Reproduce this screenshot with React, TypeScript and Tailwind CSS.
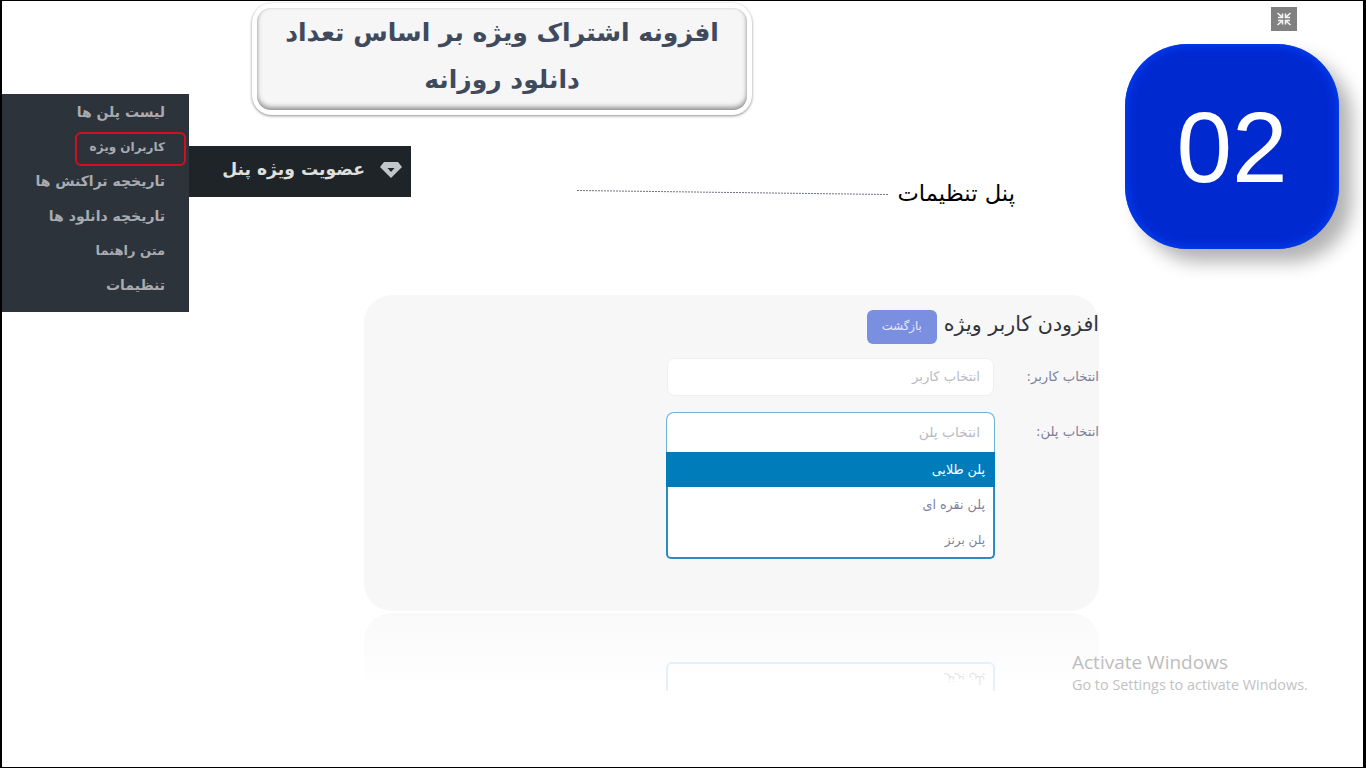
import React from 'react';

const fa = { fontFamily: '"DejaVu Sans", "Noto Sans", sans-serif' };

const SideMenu = () => (
  <div dir="rtl" className="absolute left-0 top-[93px] w-[187px] h-[218px] bg-[#2c333b] flex flex-col pt-[1px] pr-[24px] text-[14px] font-bold text-[#a9abb0]">
    <div className="h-[34.6px] flex items-center whitespace-nowrap">لیست پلن ها</div>
    <div className="h-[34.6px] flex items-center whitespace-nowrap relative text-[12px] pt-[1px]">
      کاربران ویژه
      <span className="absolute right-[-21px] top-[2px] w-[111px] h-[34px] border-2 border-[#d0101c] rounded-[6px]" />
    </div>
    <div className="h-[34.6px] flex items-center whitespace-nowrap">تاریخچه تراکنش ها</div>
    <div className="h-[34.6px] flex items-center whitespace-nowrap">تاریخچه دانلود ها</div>
    <div className="h-[34.6px] flex items-center whitespace-nowrap text-[13px]">متن راهنما</div>
    <div className="h-[34.6px] flex items-center whitespace-nowrap">تنظیمات</div>
  </div>
);

const HeaderBar = () => (
  <div dir="rtl" className="absolute left-[187px] top-[145px] w-[222px] h-[51px] bg-[#1f2429] flex items-center pr-[8px] gap-[14px] pb-[3px]">
    <svg width="24" height="18" viewBox="0 0 24 18">
      <path d="M5 1h14l4 5-11 11L1 6z" fill="#c3c6c8" />
      <path d="M8.5 7h7L12 11z" fill="#20252a" />
    </svg>
    <span className="text-[17.2px] font-bold text-[#dfe0de] whitespace-nowrap">عضویت ویژه پنل</span>
  </div>
);

const TitleCard = () => (
  <div className="absolute left-[250px] top-[2px] w-[500px] h-[112px] bg-white rounded-[20px] p-[5px] shadow-[0_1px_3px_rgba(0,0,0,0.45)]">
    <div dir="rtl" className="h-full rounded-[14px] bg-[#f6f6f6] shadow-[inset_0_-3px_5px_rgba(0,0,0,0.38),inset_0_0_3px_rgba(0,0,0,0.12)] flex items-center justify-center text-center text-[25px] leading-[47px] font-bold text-[#3f4a5c] pb-[6px]">
      <div>
        افزونه اشتراک ویژه بر اساس تعداد
        <br />
        دانلود روزانه
      </div>
    </div>
  </div>
);

const NumberBadge = () => (
  <div className="absolute left-[1123px] top-[43px] w-[214px] h-[205px] rounded-[62px] bg-[#0029d0] shadow-[inset_0_0_12px_#0048ff,13px_13px_18px_rgba(0,0,0,0.3)] flex items-center justify-center">
    <span className="text-[100px] leading-none text-white" style={{ fontFamily: '"Liberation Sans", Arial, sans-serif' }}>
      02
    </span>
  </div>
);

const CollapseIcon = () => (
  <div className="absolute left-[1269px] top-[6px] w-[26px] h-[24px] bg-[#808080] flex items-center justify-center">
    <svg width="16" height="14" viewBox="0 0 16 14" fill="none" stroke="#f2f2f2" strokeWidth="1.6">
      <path d="M1.5 1 6 5M6.5 1.5v4H2" />
      <path d="M14.5 1 10 5M9.5 1.5v4H14" />
      <path d="M1.5 13 6 9M6.5 12.5v-4H2" />
      <path d="M14.5 13 10 9M9.5 12.5v-4H14" />
    </svg>
  </div>
);

const Callout = () => (
  <>
    <svg className="absolute left-[575px] top-[187px]" width="312" height="8" viewBox="0 0 312 8">
      <line x1="0" y1="2.5" x2="311" y2="6.5" stroke="#6b7280" strokeWidth="1" strokeDasharray="2 1" />
    </svg>
    <div dir="rtl" className="absolute left-[863px] top-[177px] w-[150px] text-[22.7px] leading-[30px] text-black whitespace-nowrap">
      پنل تنظیمات
    </div>
  </>
);

const FormPanel = () => (
  <div dir="rtl" className="absolute left-[362px] top-[294px] w-[735px] h-[316px] bg-[#f7f7f7] rounded-[28px] overflow-hidden flex flex-col pt-[15px]">
    <div className="flex items-center h-[34px] gap-[7px]">
      <span className="text-[20.6px] leading-[28px] text-[#30343a] whitespace-nowrap pb-[6px]">افزودن کاربر ویژه</span>
      <span className="w-[70px] h-[34px] rounded-[6px] bg-[#7a8fdf] text-[11.7px] text-[#e6e9f8] flex items-center justify-center">بازگشت</span>
    </div>
    <div className="flex mt-[14px]">
      <div className="w-[105px] h-[38px] flex items-center text-[13.2px] text-[#7d7f9c] whitespace-nowrap">انتخاب کاربر:</div>
      <div className="w-[327px] h-[38px] bg-white border border-[#efefef] rounded-[8px] flex items-center pr-[13px] text-[13.2px] text-[#b9bac4]">انتخاب کاربر</div>
    </div>
    <div className="flex mt-[16px]">
      <div className="w-[104px] h-[40px] flex items-center text-[13.2px] text-[#7d7f9c] whitespace-nowrap">انتخاب پلن:</div>
      <div className="w-[329px]">
        <div className="h-[40px] bg-white border border-b-0 border-[#6fb1d8] rounded-t-[8px] flex items-center pr-[14px] pb-[1px] text-[13.8px] text-[#b9bac4]">انتخاب پلن</div>
        <div className="h-[107px] bg-white border-2 border-t-0 border-[#2a8cc4] rounded-b-[5px] text-[12.7px] text-[#7d7f9c]">
          <div className="h-[35px] -mx-[2px] bg-[#007cba] flex items-center pr-[10px] text-[12.7px] text-white">پلن طلایی</div>
          <div className="h-[36px] flex items-center pr-[8px]">پلن نقره ای</div>
          <div className="h-[34px] flex items-center pr-[8px] text-[12px]">پلن برنز</div>
        </div>
      </div>
    </div>
  </div>
);

// faded mirror of the panel under it
const Reflection = () => (
  <div className="absolute left-[362px] top-[612px] w-[735px] h-[78px] rounded-t-[28px] bg-gradient-to-b from-[#f9f9f9] to-white overflow-hidden">
    <div className="absolute left-[302px] top-[49px] w-[329px] h-[40px] rounded-t-[6px] border-2 border-[#e6f0f8] bg-white/60" />
    <div dir="rtl" className="absolute left-[581px] top-[58px] text-[12px] text-[#e4e4e8] [transform:scaleY(-1)]">پلن برنز</div>
  </div>
);

const ActivateWindows = () => (
  <div className="absolute left-[1070px] top-[648px] text-[#bdbdbd]" style={{ fontFamily: '"Open Sans", "Noto Sans", sans-serif' }}>
    <div className="text-[19px] leading-[26px]">Activate Windows</div>
    <div className="text-[14.4px] leading-[20px] text-[#c2c2c2]">Go to Settings to activate Windows.</div>
  </div>
);

export default function App() {
  return (
    <div className="relative w-[1366px] h-[768px] bg-white border-t border-b border-l-2 border-r-[3px] border-black overflow-hidden" style={fa}>
      <SideMenu />
      <HeaderBar />
      <TitleCard />
      <NumberBadge />
      <CollapseIcon />
      <Callout />
      <FormPanel />
      <Reflection />
      <ActivateWindows />
    </div>
  );
}
